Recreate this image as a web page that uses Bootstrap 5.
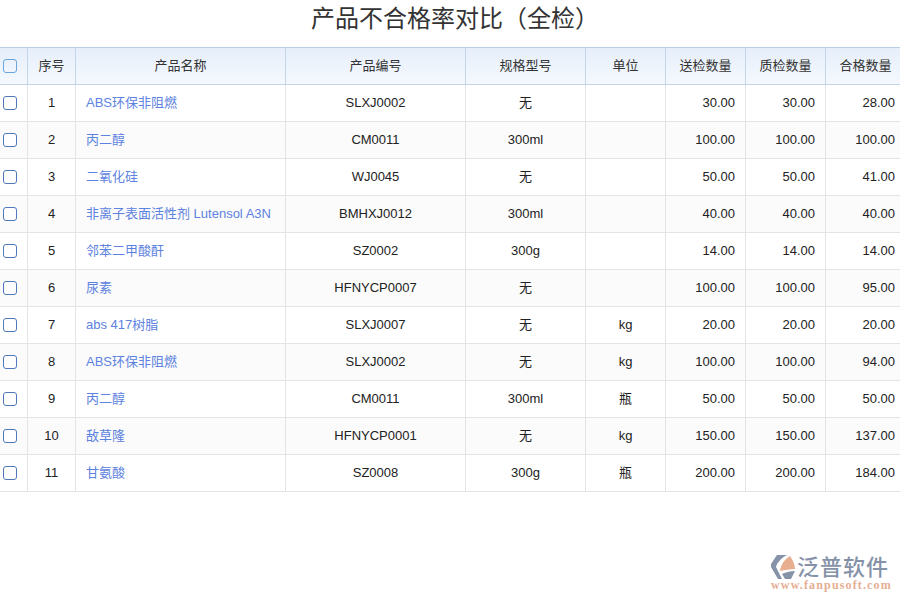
<!DOCTYPE html>
<html>
  <head>
    <title>产品不合格率对比</title>
    <link href="https://cdn.jsdelivr.net/npm/bootstrap@5.3.3/dist/css/bootstrap.min.css" rel="stylesheet" />
    <style>
      body {
        font-family: "Liberation Sans", "Noto Sans CJK SC", sans-serif;
        background: #fff;
        overflow: hidden;
        height: 600px;
      }
      .page-title {
        height: 47px;
        line-height: 38px;
        font-size: 24px;
        color: #333;
        font-weight: 400;
        margin: 0;
        padding-left: 10px;
      }
      .rate-table {
        table-layout: fixed;
        width: 906px;
        max-width: none;
        margin: 0;
        font-size: 13px;
        color: #222;
        border-collapse: separate;
        border-spacing: 0;
      }
      .rate-table th,
      .rate-table td {
        height: 37px;
        padding: 0 10px;
        vertical-align: middle;
        border-width: 0 1px 1px 0;
        border-style: solid;
        border-color: #e2e4e8;
        white-space: nowrap;
        background: #fff;
      }
      .rate-table tbody tr:nth-child(even) td {
        background: #fbfbfb;
      }
      .rate-table thead th {
        font-weight: 400;
        color: #333;
        background: linear-gradient(#e6eefa, #f5f9fe);
        border-color: #c3d6e8;
        border-top: 1px solid #bccde3;
        height: 38px;
        padding: 0;
      }
      .rate-table .cell-check {
        padding: 0;
        text-align: center;
      }
      .rate-table .cell-center {
        padding: 0;
        text-align: center;
      }
      .rate-table a {
        color: #5d82e0;
        text-decoration: none;
      }
      .tick-box {
        display: block;
        width: 14px;
        height: 14px;
        margin: 0 0 0 3px;
        border: 1px solid #5079bd;
        border-radius: 3px;
        background: #fff;
      }
      thead .tick-box {
        border-color: #69a6dc;
        background: transparent;
      }
      .brand-mark {
        position: absolute;
        left: 771px;
        top: 554px;
        width: 122px;
      }
      .brand-name {
        font-size: 22px;
        line-height: 25px;
        letter-spacing: 1px;
        color: #8592a8;
        font-weight: 500;
        white-space: nowrap;
      }
      .brand-url {
        font-family: "Liberation Serif", serif;
        font-size: 12px;
        line-height: 11px;
        letter-spacing: 1.15px;
        color: #e6ae93;
        font-weight: 700;
        white-space: nowrap;
      }
    </style>
  </head>
  <body>
    <h1 class="page-title text-center">产品不合格率对比（全检）</h1>
    <table class="table rate-table">
      <colgroup>
        <col style="width: 28px" />
        <col style="width: 48px" />
        <col style="width: 210px" />
        <col style="width: 180px" />
        <col style="width: 120px" />
        <col style="width: 80px" />
        <col style="width: 80px" />
        <col style="width: 80px" />
        <col style="width: 80px" />
      </colgroup>
      <thead>
        <tr>
          <th class="cell-check"><span class="tick-box"></span></th>
          <th class="text-center">序号</th>
          <th class="text-center">产品名称</th>
          <th class="text-center">产品编号</th>
          <th class="text-center">规格型号</th>
          <th class="text-center">单位</th>
          <th class="text-center">送检数量</th>
          <th class="text-center">质检数量</th>
          <th class="text-center">合格数量</th>
        </tr>
      </thead>
      <tbody id="rows"></tbody>
    </table>
    <div class="brand-mark d-flex flex-column">
      <div class="d-flex align-items-center">
        <svg width="26" height="26" viewBox="0 0 26 26" class="flex-shrink-0">
          <path d="M0 10L6 1H16C10 4 6 9 5 13L11 25H7L0 13Z" fill="#8592a8" />
          <path d="M9 17C10 10 14 5 19 2C22 6 24 11 24 15C19 15 14 16 9 17Z" fill="#e8ae90" />
          <path d="M11 20C15 18 20 17 24 17L20 25H14Z" fill="#8592a8" />
        </svg>
        <span class="brand-name">泛普软件</span>
      </div>
      <div class="brand-url">www.fanpusoft.com</div>
    </div>
    <script>
      let allRows = [
        ["ABS环保非阻燃", "SLXJ0002", "无", "", "30.00", "30.00", "28.00"],
        ["丙二醇", "CM0011", "300ml", "", "100.00", "100.00", "100.00"],
        ["二氧化硅", "WJ0045", "无", "", "50.00", "50.00", "41.00"],
        ["非离子表面活性剂 Lutensol A3N", "BMHXJ0012", "300ml", "", "40.00", "40.00", "40.00"],
        ["邻苯二甲酸酐", "SZ0002", "300g", "", "14.00", "14.00", "14.00"],
        ["尿素", "HFNYCP0007", "无", "", "100.00", "100.00", "95.00"],
        ["abs 417树脂", "SLXJ0007", "无", "kg", "20.00", "20.00", "20.00"],
        ["ABS环保非阻燃", "SLXJ0002", "无", "kg", "100.00", "100.00", "94.00"],
        ["丙二醇", "CM0011", "300ml", "瓶", "50.00", "50.00", "50.00"],
        ["敌草隆", "HFNYCP0001", "无", "kg", "150.00", "150.00", "137.00"],
        ["甘氨酸", "SZ0008", "300g", "瓶", "200.00", "200.00", "184.00"],
      ];
      let content = "";
      allRows.forEach((row, i) => {
        content += `
          <tr>
            <td class="cell-check"><span class="tick-box"></span></td>
            <td class="cell-center">${i + 1}</td>
            <td><a href="#">${row[0]}</a></td>
            <td class="cell-center">${row[1]}</td>
            <td class="cell-center">${row[2]}</td>
            <td class="cell-center">${row[3]}</td>
            <td class="text-end">${row[4]}</td>
            <td class="text-end">${row[5]}</td>
            <td class="text-end">${row[6]}</td>
          </tr>`;
      });
      document.getElementById("rows").innerHTML = content;
    </script>
    <script src="https://cdn.jsdelivr.net/npm/bootstrap@5.3.3/dist/js/bootstrap.bundle.min.js"></script>
  </body>
</html>
